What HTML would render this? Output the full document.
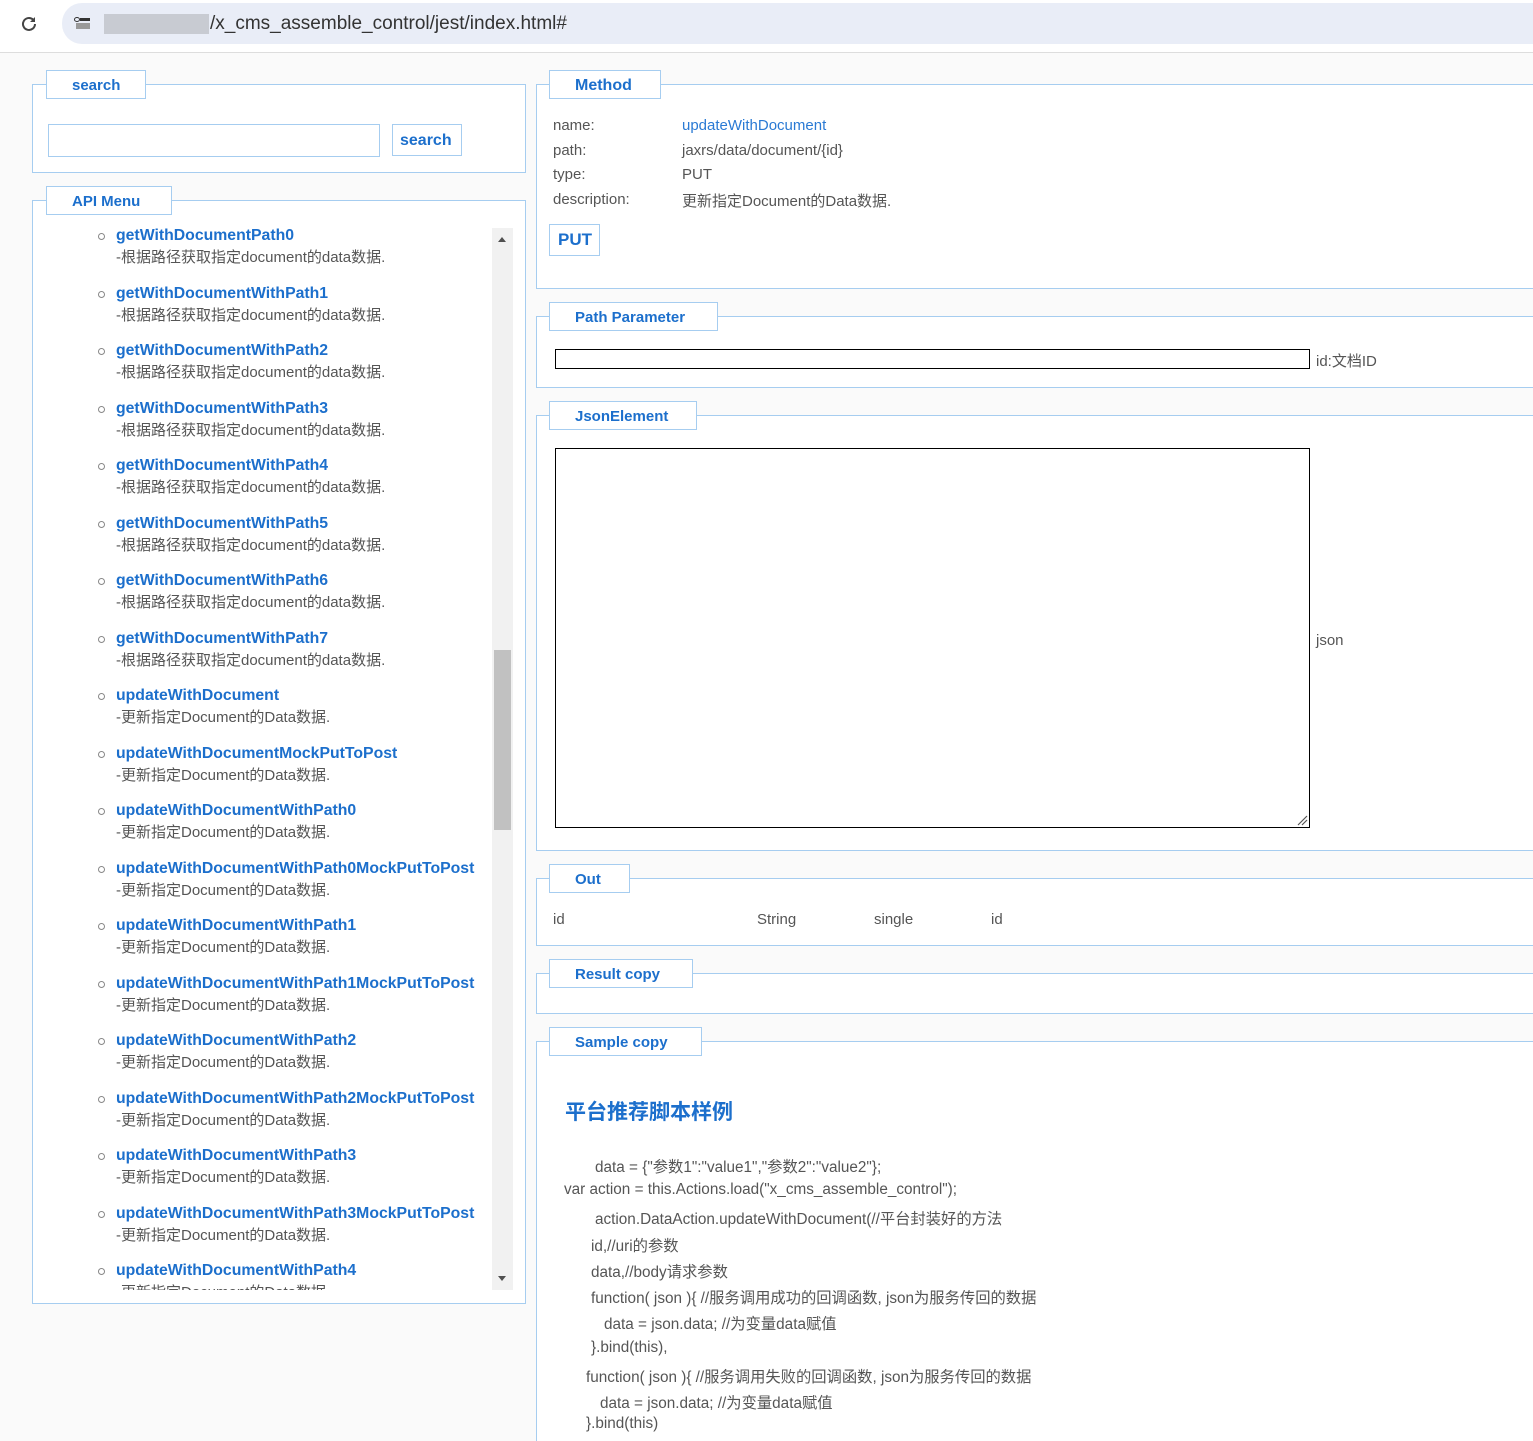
<!DOCTYPE html>
<html><head><meta charset="utf-8">
<style>
*{box-sizing:border-box;margin:0;padding:0}
html,body{width:1533px;height:1441px;overflow:hidden}
body{background:#fafafa;font-family:"Liberation Sans","Noto Sans CJK SC",sans-serif;position:relative;color:#555}
.a{position:absolute}
.fs{position:absolute;border:1px solid #a6cdf0;background:#fff}
.lg{position:absolute;border:1px solid #a6cdf0;background:#fff;color:#1c6fcc;font-weight:bold;font-size:15px;height:29px;line-height:29px;padding-left:25px}
.t{position:absolute;font-size:15px;color:#555;white-space:nowrap}
.it{position:absolute;left:0;white-space:nowrap}
.it b{position:absolute;left:84px;top:1px;font-size:15.8px;color:#1c6fcc;line-height:18px}
.it i{position:absolute;left:84px;top:23px;font-style:normal;font-size:15px;color:#555;line-height:18px}
.it s{position:absolute;left:66px;top:7px;width:7px;height:7px;border:1px solid #888;border-radius:50%}
.c{position:absolute;font-size:15.3px;color:#555;white-space:nowrap}
</style></head><body>
<div class="a" style="left:0;top:0;width:1533px;height:53px;background:#fff;border-bottom:1px solid #ddd"></div>
<svg class="a" style="left:18px;top:13px" width="22" height="22" viewBox="0 0 22 22"><path d="M17 11a6 6 0 1 1-2-4.5" fill="none" stroke="#444" stroke-width="2"/><path d="M17 4v5h-5" fill="#444"/></svg>
<div class="a" style="left:62px;top:3px;width:1471px;height:41px;border-radius:20px 0 0 20px;background:#e9edf7"></div>
<div class="a" style="left:74px;top:17px;width:6px;height:5px;border:1.5px solid #333;border-radius:50%"></div>
<div class="a" style="left:80px;top:18px;width:10px;height:3px;background:#333"></div>
<div class="a" style="left:76px;top:23px;width:14px;height:6px;background:#999"></div>
<div class="a" style="left:104px;top:14px;width:105px;height:20px;background:#c8cbd2"></div>
<div class="t" style="left:210px;top:13px;font-size:19px;color:#333">/x_cms_assemble_control/jest/index.html#</div>

<div class="fs" style="left:32px;top:84px;width:494px;height:89px"></div>
<div class="lg" style="left:46px;top:70px;width:100px">search</div>
<div class="a" style="left:48px;top:124px;width:332px;height:33px;border:1px solid #a6cdf0;background:#fff"></div>
<div class="lg" style="left:392px;top:124px;width:70px;height:32px;line-height:31px;padding-left:7px;font-size:16px">search</div>

<div class="fs" style="left:32px;top:200px;width:494px;height:1104px"></div>
<div class="lg" style="left:46px;top:186px;width:126px">API Menu</div>
<div class="a" style="left:32px;top:226px;width:460px;height:1064px;overflow:hidden">
<div class="it" style="top:0px"><s></s><b>getWithDocumentPath0</b><i>-根据路径获取指定document的data数据.</i></div>
<div class="it" style="top:57.5px"><s></s><b>getWithDocumentWithPath1</b><i>-根据路径获取指定document的data数据.</i></div>
<div class="it" style="top:115px"><s></s><b>getWithDocumentWithPath2</b><i>-根据路径获取指定document的data数据.</i></div>
<div class="it" style="top:172.5px"><s></s><b>getWithDocumentWithPath3</b><i>-根据路径获取指定document的data数据.</i></div>
<div class="it" style="top:230px"><s></s><b>getWithDocumentWithPath4</b><i>-根据路径获取指定document的data数据.</i></div>
<div class="it" style="top:287.5px"><s></s><b>getWithDocumentWithPath5</b><i>-根据路径获取指定document的data数据.</i></div>
<div class="it" style="top:345px"><s></s><b>getWithDocumentWithPath6</b><i>-根据路径获取指定document的data数据.</i></div>
<div class="it" style="top:402.5px"><s></s><b>getWithDocumentWithPath7</b><i>-根据路径获取指定document的data数据.</i></div>
<div class="it" style="top:460px"><s></s><b>updateWithDocument</b><i>-更新指定Document的Data数据.</i></div>
<div class="it" style="top:517.5px"><s></s><b>updateWithDocumentMockPutToPost</b><i>-更新指定Document的Data数据.</i></div>
<div class="it" style="top:575px"><s></s><b>updateWithDocumentWithPath0</b><i>-更新指定Document的Data数据.</i></div>
<div class="it" style="top:632.5px"><s></s><b>updateWithDocumentWithPath0MockPutToPost</b><i>-更新指定Document的Data数据.</i></div>
<div class="it" style="top:690px"><s></s><b>updateWithDocumentWithPath1</b><i>-更新指定Document的Data数据.</i></div>
<div class="it" style="top:747.5px"><s></s><b>updateWithDocumentWithPath1MockPutToPost</b><i>-更新指定Document的Data数据.</i></div>
<div class="it" style="top:805px"><s></s><b>updateWithDocumentWithPath2</b><i>-更新指定Document的Data数据.</i></div>
<div class="it" style="top:862.5px"><s></s><b>updateWithDocumentWithPath2MockPutToPost</b><i>-更新指定Document的Data数据.</i></div>
<div class="it" style="top:920px"><s></s><b>updateWithDocumentWithPath3</b><i>-更新指定Document的Data数据.</i></div>
<div class="it" style="top:977.5px"><s></s><b>updateWithDocumentWithPath3MockPutToPost</b><i>-更新指定Document的Data数据.</i></div>
<div class="it" style="top:1035px"><s></s><b>updateWithDocumentWithPath4</b><i>-更新指定Document的Data数据.</i></div>
</div>
<div class="a" style="left:492px;top:228px;width:21px;height:1062px;background:#f1f1f1"></div>
<div class="a" style="left:494px;top:650px;width:17px;height:180px;background:#c1c1c1"></div>
<div class="a" style="left:498px;top:237px;border-left:4px solid transparent;border-right:4px solid transparent;border-bottom:5px solid #505050"></div>
<div class="a" style="left:498px;top:1276px;border-left:4px solid transparent;border-right:4px solid transparent;border-top:5px solid #505050"></div>

<div class="fs" style="left:536px;top:84px;width:997px;height:205px;border-right:none"></div>
<div class="lg" style="left:549px;top:70px;width:112px;font-size:16px">Method</div>
<div class="t" style="left:553px;top:117px">name:</div><div class="t" style="left:682px;top:117px;color:#2a7ad4">updateWithDocument</div>
<div class="t" style="left:553px;top:142px">path:</div><div class="t" style="left:682px;top:142px">jaxrs/data/document/{id}</div>
<div class="t" style="left:553px;top:166px">type:</div><div class="t" style="left:682px;top:166px">PUT</div>
<div class="t" style="left:553px;top:191px">description:</div><div class="t" style="left:682px;top:190px">更新指定Document的Data数据.</div>
<div class="lg" style="left:549px;top:224px;width:51px;height:32px;line-height:30px;padding-left:8px;font-size:17px">PUT</div>

<div class="fs" style="left:536px;top:316px;width:997px;height:72px;border-right:none"></div>
<div class="lg" style="left:549px;top:302px;width:169px">Path Parameter</div>
<div class="a" style="left:555px;top:349px;width:755px;height:20px;border:1px solid #000;background:#fff"></div>
<div class="t" style="left:1316px;top:350px">id:文档ID</div>

<div class="fs" style="left:536px;top:415px;width:997px;height:436px;border-right:none"></div>
<div class="lg" style="left:549px;top:401px;width:148px">JsonElement</div>
<div class="a" style="left:555px;top:448px;width:755px;height:380px;border:1px solid #000;background:#fff"></div>
<svg class="a" style="left:1296px;top:814px" width="12" height="12"><path d="M2 11L11 2M6 11L11 6" stroke="#555" stroke-width="1.2"/></svg>
<div class="t" style="left:1316px;top:632px">json</div>

<div class="fs" style="left:536px;top:878px;width:997px;height:68px;border-right:none"></div>
<div class="lg" style="left:549px;top:864px;width:81px">Out</div>
<div class="t" style="left:553px;top:911px">id</div>
<div class="t" style="left:757px;top:911px">String</div>
<div class="t" style="left:874px;top:911px">single</div>
<div class="t" style="left:991px;top:911px">id</div>

<div class="fs" style="left:536px;top:973px;width:997px;height:41px;border-right:none"></div>
<div class="lg" style="left:549px;top:959px;width:144px">Result copy</div>

<div class="fs" style="left:536px;top:1041px;width:997px;height:400px;border-right:none;border-bottom:none"></div>
<div class="lg" style="left:549px;top:1027px;width:153px">Sample copy</div>
<div class="a" style="left:565px;top:1096px;font-size:21px;font-weight:bold;color:#1c6fcc;white-space:nowrap">平台推荐脚本样例</div>
<div class="c" style="left:595px;top:1155px">data = {"参数1":"value1","参数2":"value2"};</div>
<div class="c" style="left:564px;top:1181px">var action = this.Actions.load("x_cms_assemble_control");</div>
<div class="c" style="left:595px;top:1207px">action.DataAction.updateWithDocument(//平台封装好的方法</div>
<div class="c" style="left:591px;top:1234px">id,//uri的参数</div>
<div class="c" style="left:591px;top:1260px">data,//body请求参数</div>
<div class="c" style="left:591px;top:1286px">function( json ){ //服务调用成功的回调函数, json为服务传回的数据</div>
<div class="c" style="left:604px;top:1312px">data = json.data; //为变量data赋值</div>
<div class="c" style="left:591px;top:1339px">}.bind(this),</div>
<div class="c" style="left:586px;top:1365px">function( json ){ //服务调用失败的回调函数, json为服务传回的数据</div>
<div class="c" style="left:600px;top:1391px">data = json.data; //为变量data赋值</div>
<div class="c" style="left:586px;top:1415px">}.bind(this)</div>
</body></html>
